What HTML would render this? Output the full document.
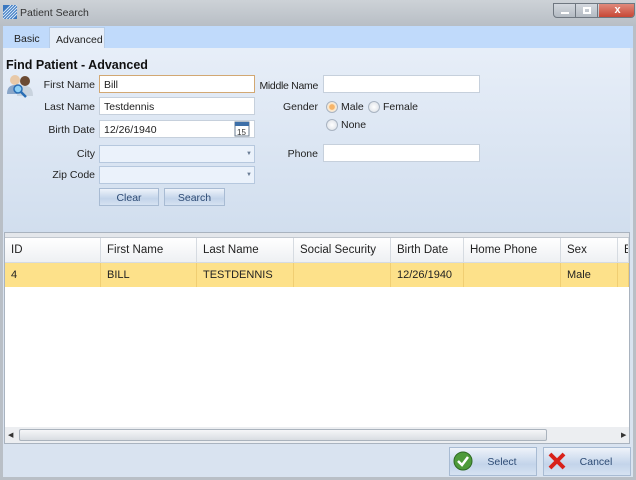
<html><head><style>
*{box-sizing:border-box;margin:0;padding:0}
body{width:636px;height:480px;overflow:hidden;font-family:"Liberation Sans",sans-serif;font-size:10.5px;color:#222;background:#b9bfc6;position:relative}
.a{position:absolute}
.tb{left:0;top:0;width:636px;height:26px;background:linear-gradient(#cdd2d7,#b8bec5)}
.win{left:3px;top:26px;width:630px;height:451px;background:#d9e3f0}
.tabs{left:3px;top:26px;width:630px;height:22px;background:#c0dafb}
.panel{left:3px;top:48px;width:627px;height:184px;background:linear-gradient(#e7eef8,#d1deee)}
.lbl{text-align:right;width:90px;font-size:10.5px}
.in{background:#fff;border:1px solid #c6d0dc;height:18px;padding:3px 4px;font-size:10.5px}
.cb{background:#ebf2fb;border:1px solid #b6c8de;height:18px}
.btn{border:1px solid #a8bbd3;background:linear-gradient(#eef3fa,#c3d4ea 60%,#d6e2f1);text-align:center;color:#2c4a74;font-size:10.5px}
.rad{width:12px;height:12px;border-radius:50%;border:1px solid #a9b4c2;background:radial-gradient(#fff,#d8dde4)}
.grid{left:4px;top:232px;width:626px;height:212px;background:#fff;border:1px solid #a9b3bf}
.h{top:238px;height:25px;background:linear-gradient(#fff,#eef0f3);border-right:1px solid #d6dbe1;border-bottom:1px solid #d6dbe1;padding:6px 0 0 6px;font-size:11.5px}
.c{top:263px;height:24px;background:#fde18a;border-right:1px solid #f0ce73;padding:6px 0 0 6px;font-size:11px}
</style></head><body>
<div class="a tb"></div>
<svg class="a" style="left:3px;top:5px" width="14" height="14"><rect width="14" height="14" fill="#3a78c0"/><path d="M0 14L14 0M3 14L14 3M6 14L14 6M9 14L14 9M0 11L11 0M0 8L8 0" stroke="#dbeafa" stroke-width="1"/></svg>
<div class="a" style="left:20px;top:7px;font-size:10.5px;color:#333">Patient Search</div>
<div class="a" style="left:553px;top:3px;width:82px;height:15px;border:1px solid #6f7780;border-radius:0 0 4px 4px;background:linear-gradient(#d3d8de,#b3bac2);overflow:hidden">
<div class="a" style="left:0;top:0;width:22px;height:15px;border-right:1px solid #6f7780"></div>
<div class="a" style="left:7px;top:8px;width:8px;height:2px;background:#fff"></div>
<div class="a" style="left:22px;top:0;width:22px;height:15px;border-right:1px solid #6f7780"></div>
<div class="a" style="left:29px;top:3px;width:8px;height:7px;border:2px solid #fff"></div>
<div class="a" style="left:45px;top:0;width:37px;height:15px;background:linear-gradient(#e08a7c,#c43d2a);color:#fff;text-align:center;font-weight:bold;font-size:11px;line-height:13px">x</div>
</div>
<div class="a win"></div>
<div class="a tabs"></div>
<div class="a" style="left:14px;top:33px">Basic</div>
<div class="a" style="left:49px;top:27px;width:56px;height:22px;background:#e7eef8;border:1px solid #b7cde8;border-bottom:none;padding:6px 0 0 6px">Advanced</div>
<div class="a panel"></div>
<div class="a" style="left:6px;top:58px;font-size:12.5px;font-weight:bold;color:#111">Find Patient - Advanced</div>
<svg class="a" style="left:6px;top:74px" width="28" height="24"><circle cx="9" cy="6" r="5" fill="#e8c9a8"/><path d="M1 20Q1 11 9 11Q17 11 17 20Z" fill="#8aa6c8"/><circle cx="19" cy="7" r="5" fill="#6b4a33"/><path d="M11 22Q11 12 19 12Q27 12 27 22Z" fill="#c9d3de"/><circle cx="12" cy="15" r="4" fill="#8fd0f5" stroke="#2a6eb5" stroke-width="1.5"/><path d="M15 18L20 23" stroke="#2a6eb5" stroke-width="2.5"/></svg>
<div class="a lbl" style="left:5px;top:79px">First Name</div>
<div class="a in" style="left:99px;top:75px;width:156px;border-color:#d2a873">Bill</div>
<div class="a lbl" style="left:5px;top:101px">Last Name</div>
<div class="a in" style="left:99px;top:97px;width:156px">Testdennis</div>
<div class="a lbl" style="left:5px;top:124px">Birth Date</div>
<div class="a in" style="left:99px;top:120px;width:156px">12/26/1940</div>
<svg class="a" style="left:234px;top:121px" width="16" height="16"><rect x="1" y="1" width="14" height="14" fill="#fff" stroke="#6b7d92"/><rect x="1" y="1" width="14" height="4" fill="#3d6fa8"/><text x="3" y="14" font-size="8" font-family="Liberation Sans" fill="#333">15</text></svg>
<div class="a lbl" style="left:5px;top:148px">City</div>
<div class="a cb" style="left:99px;top:145px;width:156px"></div>
<div class="a" style="left:246px;top:151px;font-size:6px;color:#6a7d95">▼</div>
<div class="a lbl" style="left:5px;top:169px">Zip Code</div>
<div class="a cb" style="left:99px;top:166px;width:156px"></div>
<div class="a" style="left:246px;top:172px;font-size:6px;color:#6a7d95">▼</div>
<div class="a btn" style="left:99px;top:188px;width:60px;height:18px;padding-top:3px">Clear</div>
<div class="a btn" style="left:164px;top:188px;width:61px;height:18px;padding-top:3px">Search</div>
<div class="a lbl" style="left:228px;top:80px;letter-spacing:-0.3px">Middle Name</div>
<div class="a in" style="left:323px;top:75px;width:157px"></div>
<div class="a lbl" style="left:228px;top:101px">Gender</div>
<div class="a rad" style="left:326px;top:101px;background:radial-gradient(#f6b56a 35%,#fde7c8 45%,#e8ecf1)"></div>
<div class="a" style="left:341px;top:101px">Male</div>
<div class="a rad" style="left:368px;top:101px"></div>
<div class="a" style="left:383px;top:101px">Female</div>
<div class="a rad" style="left:326px;top:119px"></div>
<div class="a" style="left:341px;top:119px">None</div>
<div class="a lbl" style="left:228px;top:148px">Phone</div>
<div class="a in" style="left:323px;top:144px;width:157px"></div>
<div class="a grid"></div>
<div class="a" style="left:5px;top:233px;width:624px;height:5px;background:#e4e7eb;border-bottom:1px solid #c2c8cf"></div>
<div class="a h" style="left:5px;width:96px">ID</div>
<div class="a h" style="left:101px;width:96px">First Name</div>
<div class="a h" style="left:197px;width:97px">Last Name</div>
<div class="a h" style="left:294px;width:97px">Social Security</div>
<div class="a h" style="left:391px;width:73px">Birth Date</div>
<div class="a h" style="left:464px;width:97px">Home Phone</div>
<div class="a h" style="left:561px;width:57px">Sex</div>
<div class="a h" style="left:618px;width:11px;overflow:hidden">Em</div>
<div class="a c" style="left:5px;width:96px">4</div>
<div class="a c" style="left:101px;width:96px">BILL</div>
<div class="a c" style="left:197px;width:97px">TESTDENNIS</div>
<div class="a c" style="left:294px;width:97px"></div>
<div class="a c" style="left:391px;width:73px">12/26/1940</div>
<div class="a c" style="left:464px;width:97px"></div>
<div class="a c" style="left:561px;width:57px">Male</div>
<div class="a c" style="left:618px;width:11px"></div>
<div class="a" style="left:5px;top:427px;width:624px;height:16px;background:#eceef1"></div>
<div class="a" style="left:8px;top:431px;font-size:7px;color:#333">◀</div>
<div class="a" style="left:19px;top:429px;width:528px;height:12px;border:1px solid #aab3bd;border-radius:2px;background:linear-gradient(#f5f6f8,#d9dde2)"></div>
<div class="a" style="left:621px;top:431px;font-size:7px;color:#333">▶</div>
<div class="a btn" style="left:449px;top:447px;width:88px;height:29px;padding-top:8px;padding-left:18px">Select</div>
<svg class="a" style="left:453px;top:451px" width="20" height="20"><circle cx="10" cy="10" r="9" fill="#4e9a3a" stroke="#2f6a24"/><path d="M5 10L9 14L15 6" stroke="#fff" stroke-width="2.5" fill="none"/></svg>
<div class="a btn" style="left:543px;top:447px;width:88px;height:29px;padding-top:8px;padding-left:18px">Cancel</div>
<svg class="a" style="left:548px;top:452px" width="18" height="18"><path d="M2 2L16 16M16 2L2 16" stroke="#d8211a" stroke-width="4"/></svg>
</body></html>
